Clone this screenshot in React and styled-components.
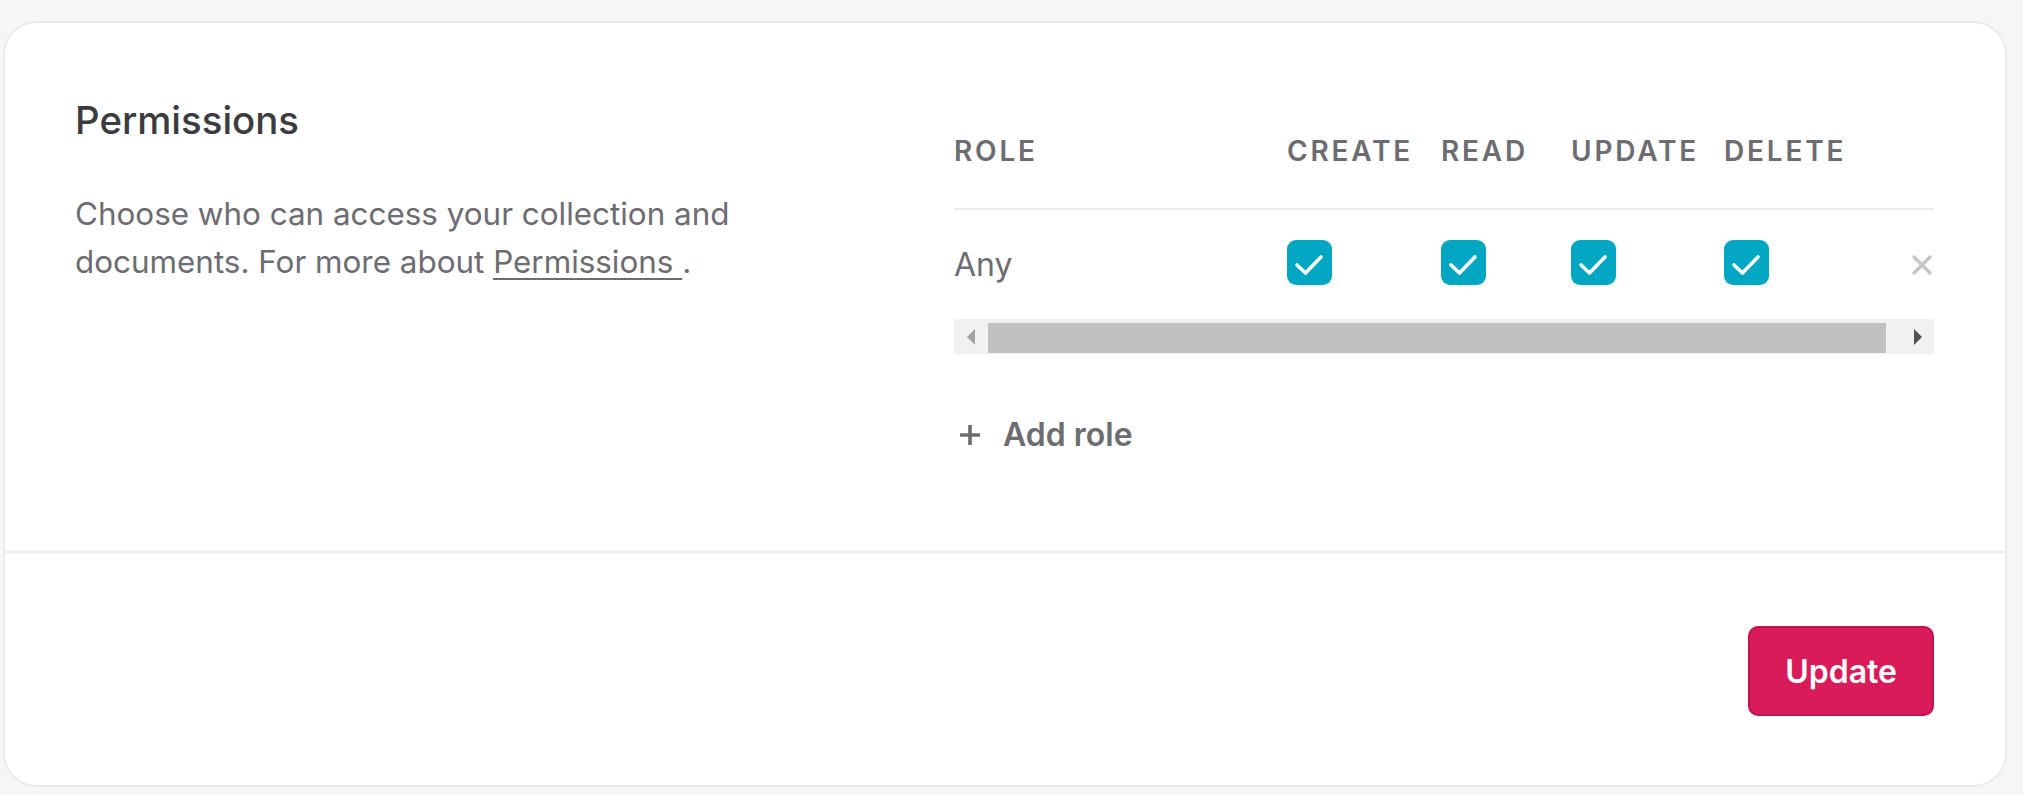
import styled, { createGlobalStyle } from "styled-components";

const GlobalStyle = createGlobalStyle`
  html, body {
    margin: 0;
    padding: 0;
    background: #f6f6f6;
    font-family: Inter, "Noto Sans", sans-serif;
  }
  * { box-sizing: border-box; }
`;

const Page = styled.div`
  padding: 21px 16px 8px 3px;
`;

const Card = styled.div`
  background: #ffffff;
  border: 2px solid #ebebeb;
  border-radius: 34px;
`;

const Section = styled.div`
  display: grid;
  grid-template-columns: 1fr 980px;
  padding: 74px 71px 92px 70px;
`;

const Intro = styled.div`
  display: flex;
  flex-direction: column;
  gap: 47px;
`;

const Title = styled.h2`
  margin: 0;
  font-size: 38.4px;
  line-height: 46px;
  font-weight: 500;
  letter-spacing: 0;
  color: #3b3b40;
`;

const Description = styled.p`
  margin: 0;
  max-width: 700px;
  font-size: 31.4px;
  line-height: 48px;
  color: #6c6c71;
`;

const DocLink = styled.a`
  color: inherit;
  text-decoration: underline;
  text-decoration-thickness: 2px;
  text-underline-offset: 5px;
`;

const TableWrap = styled.div`
  margin-top: 34px;
  display: flex;
  flex-direction: column;
`;

const Row = styled.div`
  display: grid;
  grid-template-columns: 333px 154px 130px 153px 1fr 24px;
  align-items: ${(p) => (p.$head ? "start" : "center")};
  height: ${(p) => (p.$head ? "79px" : "109px")};
  border-bottom: ${(p) => (p.$head ? "2px solid #ededed" : "none")};
`;

const HeadCell = styled.div`
  font-size: 28px;
  line-height: 40px;
  font-weight: 600;
  letter-spacing: 0.1em;
  text-transform: uppercase;
  color: #6c6c71;
`;

const RoleName = styled.div`
  font-size: 32px;
  line-height: 48px;
  color: #6c6c71;
`;

const Check = styled.span`
  display: inline-flex;
  align-items: center;
  justify-content: center;
  width: 45px;
  height: 45px;
  border-radius: 9px;
  background: #01a7c2;
`;

const RemoveButton = styled.button`
  display: flex;
  align-items: center;
  justify-content: flex-end;
  padding: 0 2px 0 0;
  border: none;
  background: none;
  cursor: pointer;
`;

const Scrollbar = styled.div`
  display: flex;
  align-items: stretch;
  height: 35px;
  background: #f1f1f1;
`;

const ScrollArrow = styled.div`
  width: 34px;
  display: flex;
  align-items: center;
  justify-content: center;
`;

const Thumb = styled.div`
  flex: 1;
  margin: 4px 14px 1px 0;
  background: #c1c1c1;
`;

const AddRole = styled.button`
  margin-top: 57px;
  align-self: flex-start;
  display: flex;
  align-items: center;
  gap: 17px;
  padding: 0;
  border: none;
  background: none;
  font-family: inherit;
  font-size: 32px;
  line-height: 48px;
  font-weight: 600;
  color: #6c6c71;
  cursor: pointer;
`;

const Footer = styled.div`
  display: flex;
  justify-content: flex-end;
  border-top: 2px solid #ededed;
  padding: 73px 71px 69px;
`;

const UpdateButton = styled.button`
  height: 90px;
  padding: 0 35px;
  border: 2px solid #c3134f;
  border-radius: 10px;
  background: #d91b5a;
  color: #ffffff;
  font-family: inherit;
  font-size: 32px;
  font-weight: 600;
  cursor: pointer;
`;

const CheckIcon = () => (
  <svg width="45" height="45" viewBox="0 0 45 45">
    <path
      d="M10 25 L18.5 33 L34 17"
      fill="none"
      stroke="#fff"
      strokeWidth="3.6"
      strokeLinecap="round"
      strokeLinejoin="round"
    />
  </svg>
);

const columns = ["Create", "Read", "Update", "Delete"];

export default function App() {
  return (
    <Page>
      <GlobalStyle />
      <Card>
        <Section>
          <Intro>
            <Title>Permissions</Title>
            <Description>
              Choose who can access your collection and documents. For more about{" "}
              <DocLink href="#">Permissions </DocLink>.
            </Description>
          </Intro>
          <TableWrap>
            <Row $head>
              <HeadCell>Role</HeadCell>
              {columns.map((c) => (
                <HeadCell key={c}>{c}</HeadCell>
              ))}
              <span />
            </Row>
            <Row>
              <RoleName>Any</RoleName>
              {columns.map((c) => (
                <div key={c}>
                  <Check>
                    <CheckIcon />
                  </Check>
                </div>
              ))}
              <RemoveButton aria-label="Remove role">
                <svg width="20" height="20" viewBox="0 0 20 20">
                  <path
                    d="M2 2 L18 18 M18 2 L2 18"
                    stroke="#c4c4c4"
                    strokeWidth="3.2"
                    strokeLinecap="round"
                  />
                </svg>
              </RemoveButton>
            </Row>
            <Scrollbar>
              <ScrollArrow>
                <svg width="9" height="16" viewBox="0 0 9 16">
                  <path d="M8 0 L0 8 L8 16 Z" fill="#a3a3a3" />
                </svg>
              </ScrollArrow>
              <Thumb />
              <ScrollArrow>
                <svg width="9" height="16" viewBox="0 0 9 16">
                  <path d="M1 0 L9 8 L1 16 Z" fill="#505050" />
                </svg>
              </ScrollArrow>
            </Scrollbar>
            <AddRole>
              <svg width="32" height="32" viewBox="0 0 32 32">
                <path
                  d="M16 6 V26 M6 16 H26"
                  stroke="#6c6c71"
                  strokeWidth="3.6"
                />
              </svg>
              Add role
            </AddRole>
          </TableWrap>
        </Section>
        <Footer>
          <UpdateButton>Update</UpdateButton>
        </Footer>
      </Card>
    </Page>
  );
}
